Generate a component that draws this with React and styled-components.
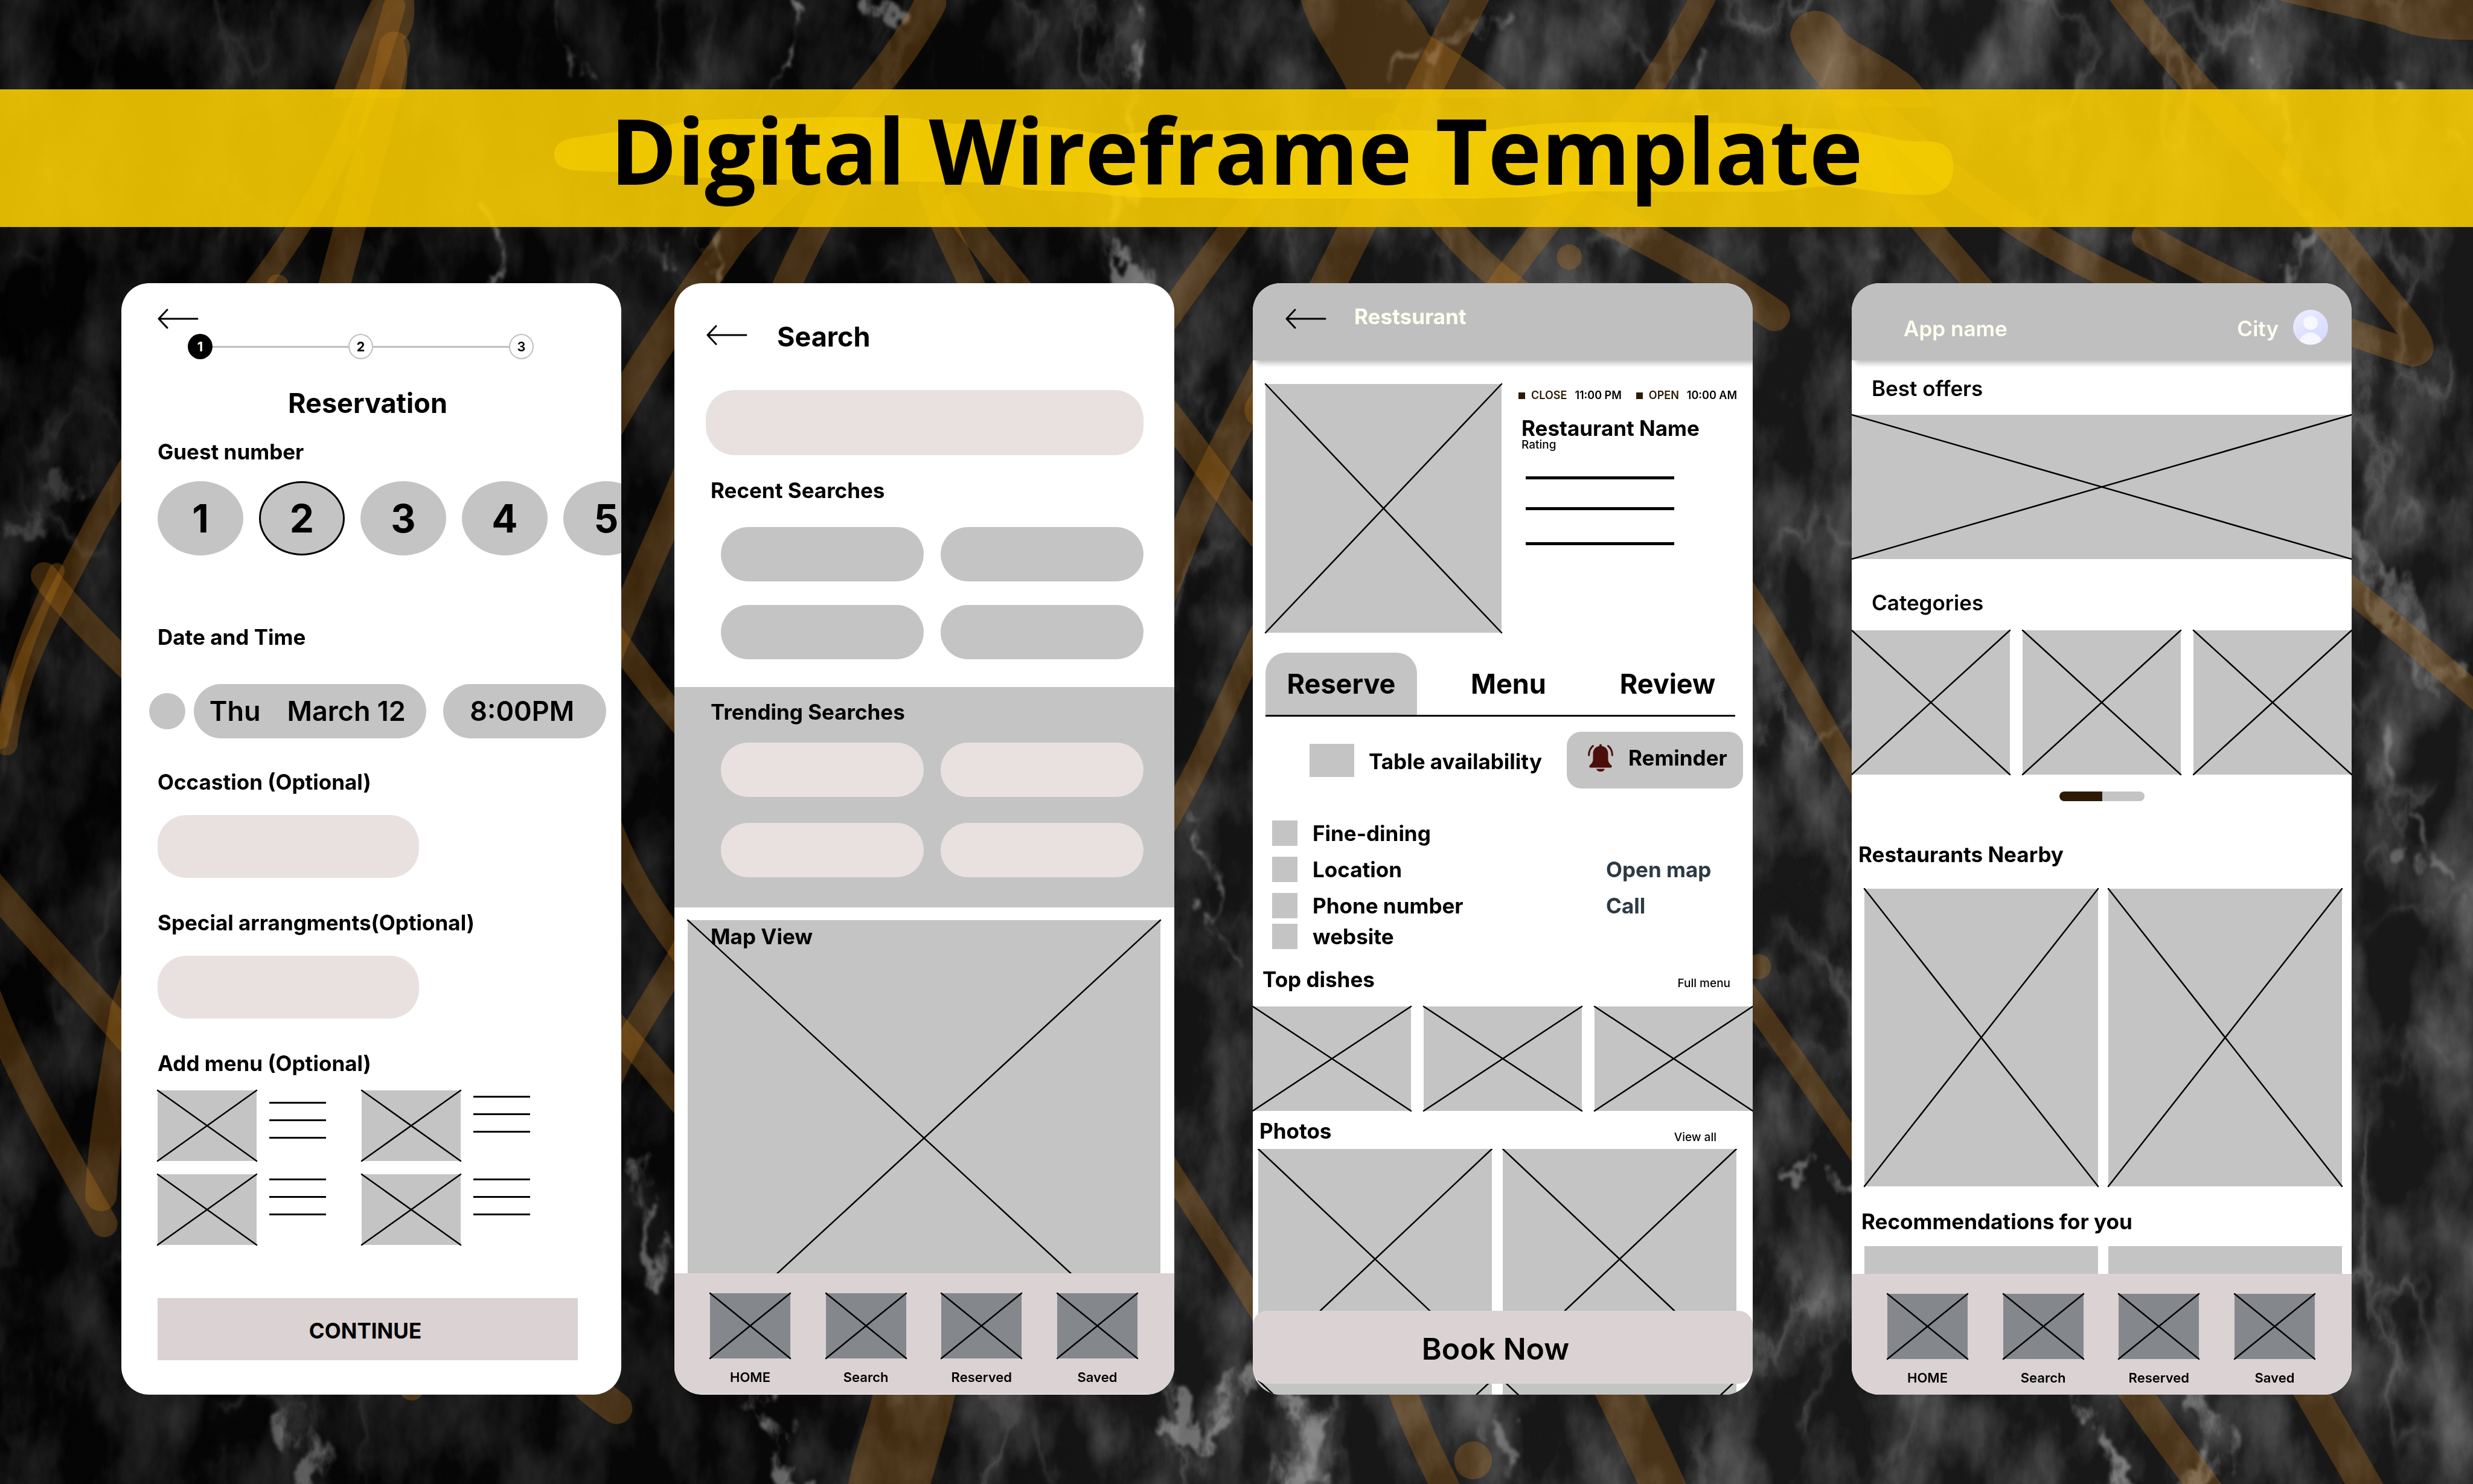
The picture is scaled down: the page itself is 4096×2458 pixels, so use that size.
import React from 'react';
import styled, { createGlobalStyle } from 'styled-components';

const ink = '#000000';
const grey = '#c4c4c4';
const headerGrey = '#bfbfbf';
const blush = '#e9e1e0';
const mauve = '#dad2d3';
const slate = '#84888c';
const cocoa = '#2e1a04';
const ivory = '#fffff0';

const GlobalStyle = createGlobalStyle`
  * { box-sizing: border-box; }
  body { margin: 0; background: #050505; }
  button, input { font: inherit; color: inherit; border: 0; padding: 0; margin: 0; background: none; }
  a { color: inherit; text-decoration: none; }
  ol, ul, p, h1, h2, h3 { margin: 0; padding: 0; list-style: none; }
`;

const Page = styled.div`
  position: relative;
  overflow: hidden;
  padding: 148px 0;
  color: ${ink};
  font-family: Inter, 'Open Sans', sans-serif;
`;

/* ---------- backdrop ---------- */

const BackdropArt = styled.svg`
  position: absolute;
  inset: 0;
  width: 100%;
  height: 100%;
`;

const scribbles = [
  ['M250 4 C232 70 205 125 168 175 C130 225 95 270 62 330 C28 395 8 430 4 472', 14],
  ['M250 30 C238 90 222 140 207 200 C180 340 120 520 80 640 C72 690 66 720 64 758', 20],
  ['M28 365 C50 395 90 430 140 480', 17],
  ['M36 362 C18 400 8 430 0 470', 10],
  ['M-10 556 C20 592 50 622 100 680', 18],
  ['M-12 620 C10 680 40 730 66 776', 17],
  ['M590 2 C560 60 500 112 465 150 C430 200 400 240 370 300', 20],
  ['M545 90 C520 140 500 170 480 230', 18],
  ['M590 120 C600 150 612 170 630 210', 16],
  ['M605 130 C625 160 645 180 690 240', 17],
  ['M800 120 C770 160 740 200 700 260', 16],
  ['M440 290 C415 350 400 380 380 430', 18],
  ['M380 390 C400 420 420 445 450 480', 15],
  ['M385 520 C400 560 415 580 445 620', 16],
  ['M440 590 C420 630 400 650 380 700', 16],
  ['M380 640 C400 660 420 685 450 720', 16],
  ['M730 250 C755 280 775 310 800 340', 18],
  ['M810 220 C785 270 765 300 735 380', 20],
  ['M800 400 C780 440 765 480 735 530', 14],
  ['M725 715 C755 765 775 790 810 850', 14],
  ['M936 -8 C900 60 840 190 800 260', 22],
  ['M1083 -8 C1040 80 985 130 945 190', 16],
  ['M880 80 C900 130 935 170 985 200', 17],
  ['M985 120 C1030 145 1075 165 1125 200', 20],
  ['M1170 70 C1195 120 1230 150 1270 200', 16],
  ['M1342 -8 C1400 70 1450 110 1490 160 C1520 200 1545 222 1530 224 C1500 215 1430 190 1360 150', 17],
  ['M1190 70 C1240 120 1300 160 1370 190', 17],
  ['M1104 370 C1130 410 1150 450 1180 500', 14],
  ['M1100 620 C1130 660 1150 690 1185 740', 14],
  ['M1480 365 C1510 390 1540 415 1580 450', 16],
  ['M360 865 C372 880 382 886 391 893', 20],
  ['M258 870 L261 880', 16],
  ['M582 870 C578 900 566 925 562 950', 51],
  ['M885 870 C895 900 905 920 920 950', 18],
  ['M1020 870 C1034 900 1045 920 1060 955', 28],
  ['M1345 870 C1365 900 1385 925 1410 960', 20],
  ['M1458 870 C1475 900 1490 925 1510 960', 21],
];

const blobs = [
  'M238 -4 L262 -4 C264 10 262 20 256 26 C260 40 258 52 256 62 L210 62 C218 40 228 14 238 -4 Z',
  'M824 -4 L888 -4 C900 10 904 18 906 22 C925 34 945 48 962 62 L856 62 C848 40 828 20 824 -4 Z',
  'M1135 22 C1138 4 1158 2 1167 16 C1168 24 1190 32 1206 44 C1216 50 1222 60 1226 68 L1165 68 C1155 54 1138 40 1135 22 Z',
  'M1430 -4 L1572 -4 L1572 25 C1550 26 1530 24 1512 16 C1490 10 1465 6 1430 -4 Z',
];

const veins = [
  ['M505 -5 C515 18 495 22 505 40 C492 50 496 62 480 70', 3, 0.6],
  ['M545 -5 C555 6 562 2 570 18', 8, 0.5],
  ['M715 -5 C712 20 724 40 716 70 C708 100 716 130 714 190', 8, 0.55],
  ['M350 0 C352 18 362 26 366 48', 3, 0.5],
  ['M308 130 C318 150 314 160 326 182', 5, 0.5],
  ['M424 140 C432 152 426 162 420 175 M450 140 C456 160 452 170 460 190', 4, 0.5],
  ['M1438 50 C1452 74 1460 110 1456 180', 7, 0.45],
  ['M1500 350 C1512 372 1530 400 1550 440', 22, 0.4],
  ['M748 500 C764 540 762 560 782 610', 3, 0.5],
  ['M1520 60 C1534 80 1556 70 1572 96', 4, 0.4],
  ['M404 732 C412 760 420 780 418 810', 8, 0.5],
  ['M12 340 C24 330 34 310 50 300', 14, 0.25],
  ['M172 880 C184 900 190 920 196 945', 16, 0.45],
  ['M480 880 C492 905 496 925 500 945', 12, 0.55],
  ['M745 890 C752 905 762 925 780 890 L790 870', 14, 0.55],
  ['M830 890 C835 910 815 925 830 950', 26, 0.55],
  ['M950 905 C956 920 948 930 956 945', 10, 0.45],
  ['M1318 888 C1330 910 1338 925 1346 945', 12, 0.6],
  ['M1395 890 C1398 905 1410 918 1400 935', 24, 0.5],
  ['M1508 470 C1518 520 1530 540 1560 560', 6, 0.4],
  ['M1130 735 C1142 748 1152 742 1172 748', 5, 0.5],
  ['M880 60 C900 20 920 30 950 14 M1080 30 C1085 50 1070 60 1078 80', 7, 0.4],
];

function Backdrop() {
  return (
    <BackdropArt viewBox="0 0 1568 941" preserveAspectRatio="xMidYMid slice" aria-hidden="true">
      <defs>
        <linearGradient id="stone" x1="0" x2="1" y1="0" y2="0.15">
          <stop offset="0" stopColor="#020202" />
          <stop offset="0.45" stopColor="#080808" />
          <stop offset="0.6" stopColor="#171717" />
          <stop offset="1" stopColor="#181818" />
        </linearGradient>
        <linearGradient id="fadeGrad" x1="0" x2="1" y1="0" y2="0.1">
          <stop offset="0" stopColor="#808080" />
          <stop offset="0.35" stopColor="#808080" />
          <stop offset="0.6" stopColor="#fff" />
          <stop offset="1" stopColor="#fff" />
        </linearGradient>
        <mask id="fade">
          <rect width="1568" height="941" fill="url(#fadeGrad)" />
        </mask>
        <filter id="smoke" x="0" y="0" width="100%" height="100%" colorInterpolationFilters="sRGB">
          <feTurbulence type="fractalNoise" baseFrequency="0.026 0.013" numOctaves="6" seed="11" result="fine" />
          <feColorMatrix
            in="fine"
            values="0 0 0 0 .42  0 0 0 0 .42  0 0 0 0 .42  1.5 0.7 0 0 -0.92"
          />
        </filter>
        <filter id="veining" x="0" y="0" width="100%" height="100%" colorInterpolationFilters="sRGB">
          <feTurbulence type="fractalNoise" baseFrequency="0.011 0.006" numOctaves="6" seed="4" result="n" />
          <feColorMatrix in="n" values="0 0 0 0 .6  0 0 0 0 .6  0 0 0 0 .6  1 0 0 0 0" result="a" />
          <feComponentTransfer in="a" result="ridge">
            <feFuncA type="table" tableValues="0 0 0 0 0 0 0 0 0 0 0 0 0.01 0.06 0.36 0.06 0.01 0 0 0 0 0 0 0 0 0 0 0" />
          </feComponentTransfer>
          <feColorMatrix in="n" values="0 0 0 0 1  0 0 0 0 1  0 0 0 0 1  0 4 0 0 -1.7" result="m" />
          <feComposite in="ridge" in2="m" operator="in" />
        </filter>
        <filter id="crack" x="-5%" y="-5%" width="110%" height="110%" colorInterpolationFilters="sRGB">
          <feTurbulence type="fractalNoise" baseFrequency="0.05 0.03" numOctaves="5" seed="7" result="w" />
          <feDisplacementMap in="SourceGraphic" in2="w" scale="46" xChannelSelector="R" yChannelSelector="G" result="d" />
          <feGaussianBlur in="d" stdDeviation="1" result="b" />
          <feColorMatrix in="w" values="0 0 0 0 1  0 0 0 0 1  0 0 0 0 1  0 0 4 0 -1.4" result="holes" />
          <feComposite in="b" in2="holes" operator="in" />
        </filter>
      </defs>
      <rect width="1568" height="941" fill="url(#stone)" />
      <g mask="url(#fade)">
        <rect width="1568" height="941" filter="url(#smoke)" />
        <rect width="1568" height="941" filter="url(#veining)" />
      </g>
      <g filter="url(#crack)" fill="none" stroke="#b4b4b4" strokeLinecap="round">
        {veins.map(([d, w, o]) => (
          <path key={d} d={d} strokeWidth={w} opacity={o} />
        ))}
      </g>
      <g fill="none" stroke="#c87c1e" strokeLinecap="round">
        {scribbles.map(([d, w]) => (
          <path key={d} d={d} strokeWidth={w} opacity="0.28" />
        ))}
      </g>
      <g fill="#c87c1e" opacity="0.28">
        {blobs.map((d) => (
          <path key={d} d={d} />
        ))}
        <circle cx="995" cy="163" r="8" />
        <circle cx="1115" cy="613" r="8" />
        <circle cx="934" cy="926" r="12" />
        <circle cx="176" cy="181" r="7" />
      </g>
    </BackdropArt>
  );
}

/* ---------- banner ---------- */

const Banner = styled.header`
  position: relative;
  display: flex;
  align-items: center;
  justify-content: center;
  height: 228px;
  padding-bottom: 28px;
  background: rgba(250, 207, 0, 0.88);
`;

const BrushMark = styled.svg`
  position: absolute;
  inset: 0;
  width: 100%;
  height: 100%;
`;

const BannerTitle = styled.h1`
  position: relative;
  font-family: 'Open Sans', 'Noto Sans', sans-serif;
  font-size: 150px;
  line-height: 200px;
  font-weight: 700;
  white-space: nowrap;
`;

/* ---------- shared pieces ---------- */

const Board = styled.main`
  position: relative;
  display: flex;
  align-items: stretch;
  margin-top: 93px;
  padding: 0 201px;
`;

const Phone = styled.section`
  position: relative;
  flex: 1 1 0;
  min-width: 0;
  margin-left: ${(p) => p.$gap || 0}px;
  display: flex;
  flex-direction: column;
  overflow: hidden;
  border-radius: 46px;
  background: #fff;
`;

const Heading = styled.h3`
  margin-top: ${(p) => p.$top || 0}px;
  padding-top: 4px;
  padding-left: ${(p) => p.$left || 0}px;
  font-size: 35px;
  line-height: 42px;
  font-weight: ${(p) => p.$weight || 700};
  white-space: nowrap;
`;

const LabelHeading = styled(Heading).attrs({ as: 'label' })`
  display: block;
`;

const ScreenTitle = styled.h2`
  padding-top: 6px;
  font-size: 45px;
  line-height: 54px;
  font-weight: 700;
  white-space: nowrap;
`;

const BackButton = styled.button`
  display: block;
  width: 68px;
  height: 34px;
  svg { display: block; }
`;

function Back() {
  return (
    <BackButton type="button" aria-label="Back">
      <svg width="68" height="34" viewBox="0 0 68 34" fill="none" stroke="#000" strokeWidth="3" strokeLinecap="round" strokeLinejoin="round">
        <path d="M16 2 L2 17 L16 32 M2 17 H66" />
      </svg>
    </BackButton>
  );
}

const Frame = styled.div`
  width: ${(p) => (p.$width ? `${p.$width}px` : 'auto')};
  height: ${(p) => p.$height}px;
  flex: none;
  background: ${(p) => p.$fill || grey};
  svg { display: block; width: 100%; height: 100%; overflow: visible; }
`;

function Placeholder({ width, height, fill }) {
  return (
    <Frame $width={width} $height={height} $fill={fill}>
      <svg stroke="#000" strokeWidth="2.5" strokeLinecap="round" aria-hidden="true">
        <line x1="0" y1="0" x2="100%" y2="100%" />
        <line x1="100%" y1="0" x2="0" y2="100%" />
      </svg>
    </Frame>
  );
}

const FrameGrid = styled.div`
  display: grid;
  grid-template-columns: repeat(${(p) => p.$cols}, 1fr);
  gap: ${(p) => p.$gap}px;
  margin-top: ${(p) => p.$top}px;
  padding: 0 ${(p) => p.$right || 0}px 0 ${(p) => p.$left || 0}px;
`;

const CroppedFrames = styled(FrameGrid)`
  height: ${(p) => p.$height}px;
  overflow: hidden;
`;

const Rule = styled.div`
  width: ${(p) => p.$width}px;
  height: ${(p) => p.$weight}px;
  margin-top: ${(p) => p.$top || 0}px;
  background: ${ink};
`;

const TabBar = styled.nav`
  display: flex;
  justify-content: space-between;
  height: 200px;
  flex: none;
  padding: 33px 61px 0 59px;
  background: ${mauve};
`;

const TabLink = styled.a`
  width: 133px;
  font-size: 22px;
  line-height: 30px;
  font-weight: 600;
  text-align: center;
  span { display: block; margin-top: 16px; }
`;

function BottomNav() {
  return (
    <TabBar>
      {['HOME', 'Search', 'Reserved', 'Saved'].map((name) => (
        <TabLink key={name} href="#">
          <Placeholder height={108} fill={slate} />
          <span>{name}</span>
        </TabLink>
      ))}
    </TabBar>
  );
}

/* ---------- reservation ---------- */

const ReservationForm = styled.form`
  display: flex;
  flex-direction: column;
  padding: 42px 0 57px;
`;

const Inset = styled.div`
  padding: 0 72px 0 60px;
`;

const Stepper = styled.ol`
  display: flex;
  align-items: center;
  margin: 8px 145px 0 110px;
`;

const Step = styled.li`
  display: grid;
  place-items: center;
  width: 41px;
  height: 42px;
  border: 2px solid ${(p) => (p.$active ? ink : headerGrey)};
  border-radius: 50%;
  background: ${(p) => (p.$active ? ink : '#fff')};
  color: ${(p) => (p.$active ? ivory : ink)};
  font-size: 22px;
  line-height: 30px;
  font-weight: ${(p) => (p.$light ? 600 : 700)};
`;

const StepLine = styled.li`
  flex: 1;
  height: 3px;
  background: ${headerGrey};
`;

const CenteredTitle = styled(ScreenTitle)`
  margin-top: 40px;
  text-align: center;
`;

const GuestRow = styled.div`
  display: flex;
  gap: 26px;
  margin-top: 28px;
  padding-left: 60px;
`;

const GuestButton = styled.button`
  flex: none;
  width: 142px;
  height: 123px;
  border: ${(p) => (p.$selected ? `3px solid ${ink}` : '0')};
  border-radius: 50%;
  background: ${grey};
  font-size: 64px;
  line-height: 80px;
  font-weight: 700;
`;

const WhenRow = styled.div`
  display: flex;
  align-items: center;
  margin-top: 57px;
  padding: 0 25px 0 46px;
`;

const Dot = styled.span`
  flex: none;
  width: 60px;
  height: 60px;
  margin-right: 14px;
  border-radius: 50%;
  background: ${grey};
`;

const WhenButton = styled.button`
  display: flex;
  justify-content: center;
  gap: 44px;
  flex: ${(p) => p.$grow} 1 0;
  height: 90px;
  margin-right: ${(p) => p.$after || 0}px;
  padding-right: 8px;
  border-radius: 45px;
  background: ${grey};
  font-size: 45px;
  line-height: 90px;
  font-weight: 600;
  white-space: nowrap;
`;

const Field = styled.input`
  display: block;
  width: ${(p) => p.$width || '433px'};
  height: ${(p) => p.$height || 104}px;
  margin-top: ${(p) => p.$top}px;
  padding: 0 44px;
  border-radius: 48px;
  background: ${blush};
  font-size: 35px;
`;

const MenuGrid = styled.div`
  display: grid;
  grid-template-columns: 279px 279px;
  gap: 22px 59px;
  margin-top: 24px;
`;

const MenuItem = styled.div`
  display: flex;
  gap: 21px;
`;

const MenuLines = styled.div`
  display: flex;
  flex-direction: column;
  gap: 26px;
  padding-top: ${(p) => p.$top}px;
`;

const ContinueButton = styled.button`
  width: 100%;
  height: 103px;
  margin-top: 88px;
  padding: 4px 8px 0 0;
  background: ${mauve};
  font-size: 35px;
  line-height: 46px;
  font-weight: 700;
`;

function ReservationScreen() {
  return (
    <Phone>
      <ReservationForm>
        <Inset>
          <Back />
        </Inset>
        <Stepper>
          <Step $active>1</Step>
          <StepLine aria-hidden="true" />
          <Step>2</Step>
          <StepLine aria-hidden="true" />
          <Step $light>3</Step>
        </Stepper>
        <Inset>
          <CenteredTitle>Reservation</CenteredTitle>
          <Heading $top={28}>Guest number</Heading>
        </Inset>
        <GuestRow>
          {[1, 2, 3, 4, 5].map((n) => (
            <GuestButton key={n} type="button" $selected={n === 2}>
              {n}
            </GuestButton>
          ))}
        </GuestRow>
        <Inset>
          <Heading $top={110}>Date and Time</Heading>
        </Inset>
        <WhenRow>
          <Dot />
          <WhenButton type="button" $grow={386} $after={28}>
            <span>Thu</span>
            <span>March 12</span>
          </WhenButton>
          <WhenButton type="button" $grow={269}>
            8:00PM
          </WhenButton>
        </WhenRow>
        <Inset>
          <LabelHeading htmlFor="occasion" $top={47}>Occastion (Optional)</LabelHeading>
          <Field id="occasion" type="text" $top={34} />
          <LabelHeading htmlFor="special" $top={49}>Special arrangments(Optional)</LabelHeading>
          <Field id="special" type="text" $top={34} />
          <Heading $top={49}>Add menu (Optional)</Heading>
          <MenuGrid>
            {[19, 9, 7, 7].map((top, i) => (
              <MenuItem key={i}>
                <Placeholder width={164} height={117} />
                <MenuLines $top={top}>
                  <Rule $width={94} $weight={3} />
                  <Rule $width={94} $weight={3} />
                  <Rule $width={94} $weight={3} />
                </MenuLines>
              </MenuItem>
            ))}
          </MenuGrid>
          <ContinueButton type="button">CONTINUE</ContinueButton>
        </Inset>
      </ReservationForm>
    </Phone>
  );
}

/* ---------- search ---------- */

const SearchBar = styled.div`
  display: flex;
  align-items: center;
  gap: 49px;
  padding: 56px 54px 0 53px;
`;

const SearchBody = styled.div`
  padding: 0 51px 0 52px;
`;

const PillGrid = styled.div`
  display: grid;
  grid-template-columns: 1fr 1fr;
  gap: ${(p) => p.$gap}px 28px;
  margin-top: ${(p) => p.$top}px;
  padding: 0 51px 0 77px;
`;

const Pill = styled.button`
  height: 90px;
  border-radius: 45px;
  background: ${(p) => p.$fill};
`;

const TrendingPanel = styled.section`
  margin-top: 46px;
  padding: 16px 0 50px;
  background: ${grey};
`;

const MapView = styled.div`
  display: grid;
  height: 585px;
  margin: 21px 23px 0 22px;
  overflow: clip;
  overflow-clip-margin: 6px;
  > * { grid-area: 1 / 1; }
`;

const MapHeading = styled(Heading)`
  padding-top: 6px;
  z-index: 1;
`;

function SearchScreen() {
  return (
    <Phone $gap={88}>
      <SearchBar>
        <Back />
        <ScreenTitle as="label" htmlFor="query">Search</ScreenTitle>
      </SearchBar>
      <SearchBody>
        <Field id="query" type="search" $width="100%" $height={108} $top={61} />
      </SearchBody>
      <Heading $top={33} $left={60}>Recent Searches</Heading>
      <PillGrid $top={40} $gap={39}>
        {[1, 2, 3, 4].map((n) => (
          <Pill key={n} type="button" aria-label={`Recent search ${n}`} $fill={grey} />
        ))}
      </PillGrid>
      <TrendingPanel>
        <Heading $left={60}>Trending Searches</Heading>
        <PillGrid $top={30} $gap={43}>
          {[1, 2, 3, 4].map((n) => (
            <Pill key={n} type="button" aria-label={`Trending search ${n}`} $fill={blush} />
          ))}
        </PillGrid>
      </TrendingPanel>
      <MapView>
        <Placeholder height={722} />
        <MapHeading $left={38}>Map View</MapHeading>
      </MapView>
      <BottomNav />
    </Phone>
  );
}

/* ---------- restaurant ---------- */

const AppHeader = styled.header`
  position: relative;
  display: flex;
  align-items: ${(p) => p.$align};
  height: 128px;
  flex: none;
  gap: ${(p) => p.$gap}px;
  padding: ${(p) => p.$pad};
  background: ${headerGrey};
  box-shadow: 6px 5px 8px rgba(0, 0, 0, 0.25);
  color: ${ivory};
`;

const Hero = styled.div`
  display: flex;
  gap: 28px;
  margin-top: 39px;
  padding: 0 21px;
`;

const HeroInfo = styled.div`
  flex: 1;
  padding-top: 7px;
`;

const Hours = styled.p`
  display: flex;
  align-items: center;
  font-size: 18px;
  line-height: 24px;
  font-weight: 600;
  white-space: nowrap;
`;

const Bullet = styled.i`
  width: 11px;
  height: 11px;
  margin-right: 10px;
  background: ${cocoa};
`;

const HoursLabel = styled.span`
  margin-right: 13px;
  color: ${cocoa};
`;

const HoursTime = styled.time`
  margin-right: ${(p) => p.$after || 0}px;
`;

const HeroName = styled.h2`
  margin-top: 24px;
  padding-left: 5px;
  font-size: 35px;
  line-height: 36px;
  font-weight: 700;
  white-space: nowrap;
`;

const Rating = styled.p`
  padding-left: 5px;
  font-size: 19px;
  line-height: 20px;
  font-weight: 500;
`;

const HeroLines = styled.div`
  padding: 42px 0 0 12px;
`;

const Tabs = styled.div`
  display: grid;
  grid-template-columns: 251px 303px 1fr;
  margin: 33px 29px 0 21px;
  border-bottom: 3px solid ${ink};
`;

const Tab = styled.button`
  height: 103px;
  border-radius: 34px 34px 0 0;
  background: ${(p) => (p.$active ? grey : 'none')};
  font-size: 45px;
  line-height: 60px;
  font-weight: 700;
`;

const AvailabilityRow = styled.div`
  display: flex;
  align-items: center;
  margin-top: 25px;
  padding: 0 16px 0 94px;
`;

const Swatch = styled.span`
  flex: none;
  width: ${(p) => p.$width}px;
  height: ${(p) => p.$height}px;
  background: ${grey};
`;

const AvailabilityText = styled(Heading).attrs({ as: 'span' })`
  flex: 1;
`;

const ReminderButton = styled.button`
  display: flex;
  align-items: center;
  gap: 25px;
  width: 292px;
  height: 94px;
  padding: 0 0 8px 35px;
  border-radius: 24px;
  background: ${grey};
  font-size: 35px;
  line-height: 46px;
  font-weight: 700;
`;

const Facts = styled.ul`
  margin-top: 53px;
`;

const Fact = styled.li`
  display: grid;
  grid-template-columns: 42px 1fr 218px;
  gap: 25px;
  height: 42px;
  margin-bottom: ${(p) => p.$after || 0}px;
  padding: 0 25px 0 32px;
  font-size: 35px;
  line-height: 42px;
  font-weight: 700;
  a { color: #2c3a44; }
`;

const SectionBar = styled.div`
  display: flex;
  justify-content: space-between;
  align-items: ${(p) => p.$align};
  margin-top: ${(p) => p.$top}px;
  padding: 0 ${(p) => p.$right}px 0 ${(p) => p.$left}px;
`;

const SmallLink = styled.a`
  font-size: 19px;
  line-height: 20px;
  font-weight: 500;
`;

const BookButton = styled.button`
  position: absolute;
  left: 0;
  right: 0;
  bottom: 18px;
  height: 121px;
  padding: 4px 24px 0 0;
  border-radius: 24px;
  background: ${mauve};
  font-size: 50px;
  line-height: 68px;
  font-weight: 600;
`;

function Bell() {
  return (
    <svg width="42" height="46" viewBox="0 0 42 46" aria-hidden="true">
      <path fill="#4a0f0a" d="M21 0.5 C22.300 .5 23 1.400 23 2.600 V3.800 C29.500 4.700 33.500 9.600 33.500 16.500 V25 C33.500 30 35.500 32.500 38.600 35.200 C40.600 37.200 39.600 39.500 37 39.500 H5 C2.400 39.500 1.400 37.200 3.400 35.200 C6.500 32.500 8.500 30 8.500 25 V16.500 C8.500 9.600 12.500 4.700 19 3.800 V2.600 C19 1.400 19.700 .5 21 .5 Z M14 41.500 H28 C27.200 44.500 24.500 46 21 46 C17.500 46 14.800 44.500 14 41.500 Z" />
      <path fill="none" stroke="#4a0f0a" strokeWidth="3" strokeLinecap="round" d="M8.500 3.500 C4 7 1.800 12 1.600 19 M33.500 3.500 C38 7 40.200 12 40.400 19" />
    </svg>
  );
}

function RestaurantScreen() {
  return (
    <Phone $gap={130}>
      <AppHeader $align="flex-end" $gap={46} $pad="0 0 52px 54px">
        <Back />
        <Heading as="h2">Restsurant</Heading>
      </AppHeader>
      <Hero>
        <Placeholder width={391} height={412} />
        <HeroInfo>
          <Hours>
            <Bullet />
            <HoursLabel>CLOSE</HoursLabel>
            <HoursTime $after={24}>11:00 PM</HoursTime>
            <Bullet />
            <HoursLabel>OPEN</HoursLabel>
            <HoursTime>10:00 AM</HoursTime>
          </Hours>
          <HeroName>Restaurant Name</HeroName>
          <Rating>Rating</Rating>
          <HeroLines>
            <Rule $width={246} $weight={5} />
            <Rule $width={246} $weight={5} $top={46} />
            <Rule $width={246} $weight={5} $top={53} />
          </HeroLines>
        </HeroInfo>
      </Hero>
      <Tabs role="tablist">
        <Tab type="button" role="tab" aria-selected="true" $active>Reserve</Tab>
        <Tab type="button" role="tab" aria-selected="false">Menu</Tab>
        <Tab type="button" role="tab" aria-selected="false">Review</Tab>
      </Tabs>
      <AvailabilityRow>
        <Swatch $width={74} $height={55} />
        <AvailabilityText $left={24}>Table availability</AvailabilityText>
        <ReminderButton type="button">
          <Bell />
          Reminder
        </ReminderButton>
      </AvailabilityRow>
      <Facts>
        <Fact $after={18}>
          <Swatch $width={42} $height={42} />
          <span>Fine-dining</span>
        </Fact>
        <Fact $after={18}>
          <Swatch $width={42} $height={42} />
          <span>Location</span>
          <a href="#">Open map</a>
        </Fact>
        <Fact $after={9}>
          <Swatch $width={42} $height={42} />
          <span>Phone number</span>
          <a href="#">Call</a>
        </Fact>
        <Fact>
          <Swatch $width={42} $height={42} />
          <span>website</span>
        </Fact>
      </Facts>
      <SectionBar $align="baseline" $top={25} $left={16} $right={37}>
        <Heading>Top dishes</Heading>
        <SmallLink href="#">Full menu</SmallLink>
      </SectionBar>
      <FrameGrid $cols={3} $gap={21} $top={24}>
        <Placeholder height={173} />
        <Placeholder height={173} />
        <Placeholder height={173} />
      </FrameGrid>
      <SectionBar $align="flex-end" $top={8} $left={11} $right={60}>
        <Heading>Photos</Heading>
        <SmallLink href="#">View all</SmallLink>
      </SectionBar>
      <CroppedFrames $cols={2} $gap={18} $top={9} $left={9} $right={27} $height={407}>
        <Placeholder height={365} />
        <Placeholder height={365} />
        <Placeholder height={365} />
        <Placeholder height={365} />
      </CroppedFrames>
      <BookButton type="button">Book Now</BookButton>
    </Phone>
  );
}

/* ---------- home ---------- */

const AppName = styled(Heading).attrs({ as: 'h2' })`
  flex: 1;
`;

const Pager = styled.div`
  width: 141px;
  height: 16px;
  margin: 28px auto 0;
  border-radius: 8px;
  background: linear-gradient(to right, ${cocoa} 50%, ${grey} 50%);
`;

function Avatar() {
  return (
    <svg width="58" height="58" viewBox="0 0 58 58" role="img" aria-label="Profile">
      <defs>
        <linearGradient id="avatarFill" x1="0" y1="0" x2="0.6" y2="1">
          <stop offset="0" stopColor="#eeeeff" />
          <stop offset="1" stopColor="#d6dbff" />
        </linearGradient>
        <clipPath id="avatarClip">
          <circle cx="29" cy="29" r="29" />
        </clipPath>
      </defs>
      <g clipPath="url(#avatarClip)">
        <rect width="58" height="58" fill="url(#avatarFill)" />
        <circle cx="29" cy="23" r="12" fill="#c9cdf5" />
        <circle cx="29" cy="22" r="12" fill="#f7f8ff" />
        <circle cx="29" cy="57" r="19" fill="#f5f6ff" />
      </g>
    </svg>
  );
}

function HomeScreen() {
  return (
    <Phone $gap={164}>
      <AppHeader $align="center" $gap={24} $pad="18px 39px 0 86px">
        <AppName $weight={600}>App name</AppName>
        <Heading as="span" $weight={600}>City</Heading>
        <Avatar />
      </AppHeader>
      <Heading $weight={600} $top={21} $left={33}>Best offers</Heading>
      <FrameGrid $cols={1} $gap={0} $top={23}>
        <Placeholder height={239} />
      </FrameGrid>
      <Heading $weight={600} $top={47} $left={33}>Categories</Heading>
      <FrameGrid $cols={3} $gap={21} $top={25}>
        <Placeholder height={239} />
        <Placeholder height={239} />
        <Placeholder height={239} />
      </FrameGrid>
      <Pager />
      <Heading $top={63} $left={11}>Restaurants Nearby</Heading>
      <FrameGrid $cols={2} $gap={17} $top={36} $left={21} $right={16}>
        <Placeholder height={493} />
        <Placeholder height={493} />
      </FrameGrid>
      <Heading $top={33} $left={16}>Recommendations for you</Heading>
      <FrameGrid $cols={2} $gap={17} $top={20} $left={21} $right={16}>
        <Frame $height={46} />
        <Frame $height={46} />
      </FrameGrid>
      <BottomNav />
    </Phone>
  );
}

export default function App() {
  return (
    <>
      <GlobalStyle />
      <Page>
        <Backdrop />
        <Banner>
          <BrushMark viewBox="0 0 4096 228" preserveAspectRatio="none" aria-hidden="true">
            <path
              fill="#ffd800"
              opacity="0.5"
              d="M918 107 C918 88 935 82 960 79 C1000 74 1040 66 1100 60 C1160 46 1230 50 1300 48 C1380 44 1450 46 1520 48 C1570 60 1600 56 1660 58 C1720 62 1740 60 1790 68 C1850 82 1860 70 1950 68 L2280 68 C2350 66 2400 72 2480 66 C2560 52 2640 54 2750 55 L2900 56 C2960 68 3020 60 3090 72 C3130 78 3140 86 3180 86 C3225 84 3235 100 3235 128 C3235 156 3222 176 3180 175 C3130 174 3100 168 3060 162 C3010 156 2970 170 2920 170 L2600 169 C2540 182 2500 178 2450 181 L2050 181 C1960 176 1900 184 1830 174 C1780 166 1740 172 1690 164 C1640 152 1600 153 1500 153 C1380 150 1250 150 1150 146 C1080 136 1000 138 950 134 C925 130 918 122 918 107 Z"
            />
          </BrushMark>
          <BannerTitle>Digital Wireframe Template</BannerTitle>
        </Banner>
        <Board>
          <ReservationScreen />
          <SearchScreen />
          <RestaurantScreen />
          <HomeScreen />
        </Board>
      </Page>
    </>
  );
}
